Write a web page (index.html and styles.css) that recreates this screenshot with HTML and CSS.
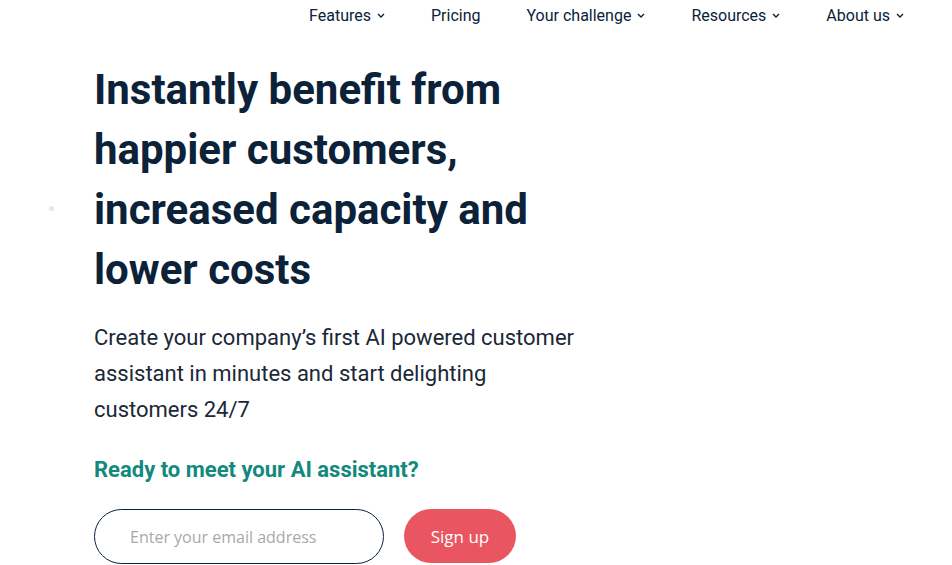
FILE: index.html
```html
<!DOCTYPE html>
<html lang="en">
<head>
    <meta charset="UTF-8">
    <meta name="viewport" content="width=device-width, initial-scale=1.0">
    <title>AI customer assistant</title>
    <link rel="stylesheet" href="styles.css">
</head>
<body>
    <nav class="nav">
        <a class="nav-item" href="#">Features <svg class="chev" viewBox="0 0 8 5"><path d="M1 1l3 3 3-3"/></svg></a>
        <a class="nav-item" href="#">Pricing</a>
        <a class="nav-item" href="#">Your challenge <svg class="chev" viewBox="0 0 8 5"><path d="M1 1l3 3 3-3"/></svg></a>
        <a class="nav-item" href="#">Resources <svg class="chev" viewBox="0 0 8 5"><path d="M1 1l3 3 3-3"/></svg></a>
        <a class="nav-item" href="#">About us <svg class="chev" viewBox="0 0 8 5"><path d="M1 1l3 3 3-3"/></svg></a>
    </nav>

    <main class="hero">
        <span class="sparkle"></span>
        <h1 class="hero-title">Instantly benefit from<br>happier customers,<br>increased capacity and<br>lower costs</h1>
        <p class="hero-text">Create your company’s first AI powered customer<br>assistant in minutes and start delighting<br>customers 24/7</p>
        <h2 class="cta-title">Ready to meet your AI assistant?</h2>
        <form class="signup">
            <input class="email" type="email" placeholder="Enter your email address">
            <button class="btn" type="submit">Sign up</button>
        </form>
    </main>
</body>
</html>
```

FILE: styles.css
```css
/* General */
body {
    font-family: Roboto, 'Liberation Sans', sans-serif;
    background: #fff;
    color: #0b2239;
    margin: 0;
    padding: 0;
}

/* Navigation */
.nav {
    display: flex;
    justify-content: flex-end;
    align-items: center;
    gap: 46px;
    height: 30px;
    padding-right: 48px;
}

.nav-item {
    display: flex;
    align-items: center;
    gap: 6px;
    color: #0b2239;
    font-size: 16px;
    text-decoration: none;
}

.chev {
    width: 8px;
    height: 5px;
    fill: none;
    stroke: #0b2239;
    stroke-width: 1.4;
}

/* Hero */
.hero {
    position: relative;
    padding: 30px 0 0 94px;
}

.sparkle {
    position: absolute;
    left: 49px;
    top: 176px;
    width: 5px;
    height: 5px;
    border-radius: 50%;
    background: #e4e6e2;
}

.hero-title {
    font-size: 42px;
    line-height: 60px;
    font-weight: 700;
    margin: 0 0 20px;
    color: #0b2239;
}

.hero-text {
    font-size: 22px;
    line-height: 36px;
    margin: 0 0 28px;
    color: #1a2838;
}

.cta-title {
    font-size: 22px;
    line-height: 28px;
    font-weight: 700;
    color: #12897d;
    margin: 0 0 25px;
}

/* Form */
.signup {
    display: flex;
    gap: 20px;
}

.email {
    box-sizing: border-box;
    width: 290px;
    height: 55px;
    border: 1px solid #0b2239;
    border-radius: 28px;
    padding: 0 0 0 35px;
    font-family: 'Open Sans', sans-serif;
    font-size: 16px;
    color: #333;
    outline: none;
}

.email::placeholder {
    color: #a7a9ab;
}

.btn {
    width: 112px;
    height: 54px;
    border: none;
    border-radius: 27px;
    background: #e95661;
    color: #fff;
    font-family: 'Open Sans', sans-serif;
    font-size: 17px;
    cursor: pointer;
}
```
